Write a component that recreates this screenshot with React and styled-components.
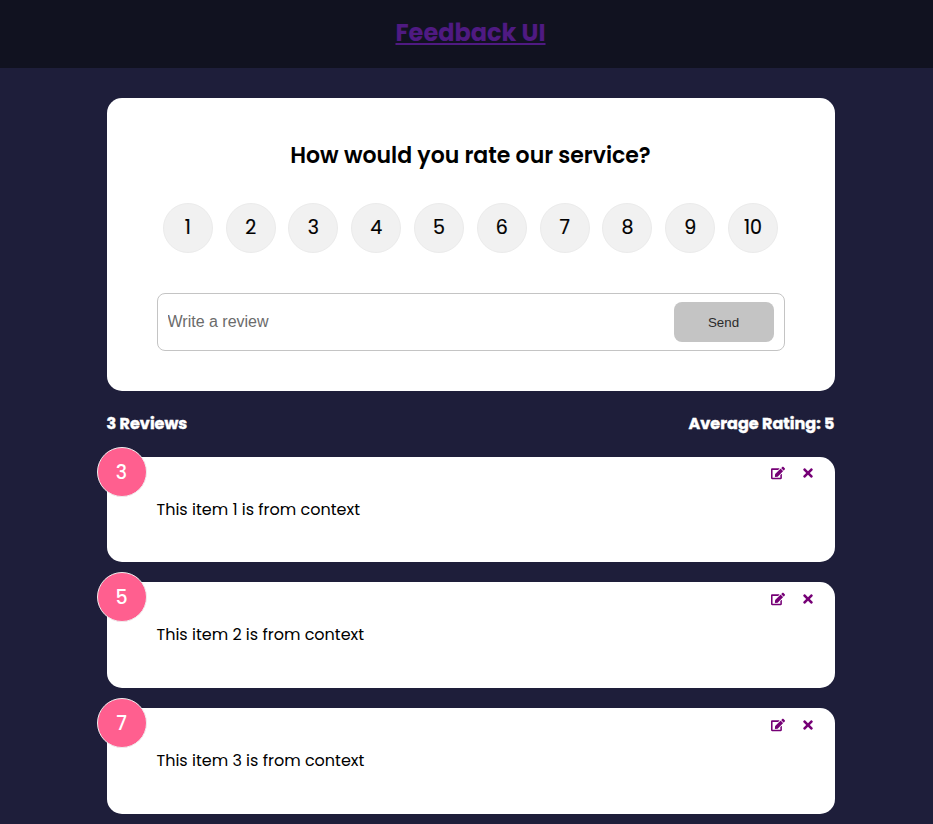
import React from 'react';
import styled, { createGlobalStyle } from 'styled-components';
import { FaTimes, FaEdit } from 'react-icons/fa';

const GlobalStyle = createGlobalStyle`
  * { box-sizing: border-box; margin: 0; padding: 0; }
  body {
    font-family: 'Poppins', 'Open Sans', sans-serif;
    background: #1e1e3a;
    line-height: 1.6;
    height: 824px;
    overflow: hidden;
  }
`;
const Header = styled.header`
  background: #111220; height: 68px; padding: 14px 0 0 8px;
  text-align: center;
`;
const Brand = styled.h2`
  font-size: 24px; font-weight: 700; color: #4f1a82; text-decoration: underline;
`;
const Container = styled.main`width: 728px; margin: 30px 98px 0 106.5px;`;
const Card = styled.div`
  background: #fff; border-radius: 15px; position: relative;
`;
const FormCard = styled(Card)`height: 293px; padding: 40px 50px;`;
const Title = styled.h2`font-size: 22px; font-weight: 600; text-align: center; line-height: 35px;`;
const Ratings = styled.ul`
  list-style: none; display: flex; justify-content: space-between;
  margin: 30px 6.5px 40px 6.3px;
`;
const Rating = styled.li`
  width: 50px; height: 50px; border: 1px solid #ebebeb; border-radius: 50%;
  background: #f1f1f1; font-size: 19px; line-height: 48px; text-align: center;
  -webkit-text-stroke: 0.2px #000;
`;
const InputGroup = styled.div`
  display: flex; align-items: center; height: 58px; padding: 8px 10px;
  border: 1px solid #c4c4c4; border-radius: 8px;
`;
const Input = styled.input`
  flex: 1; border: 0; outline: 0; font: 16px 'Liberation Sans', sans-serif;
  &::placeholder { color: #6b6b6b; }
`;
const Send = styled.button`
  width: 100px; height: 40px; border: 0; border-radius: 8px; background: #c4c4c4;
  color: #2b2b2b; font: 13.333px 'Liberation Sans', sans-serif;
`;
const Stats = styled.div`
  display: flex; justify-content: space-between; color: #fff; font-weight: 700;
  margin: 20px 0 21px; height: 24.8px; line-height: 25px;
  -webkit-text-stroke: 0.4px #fff;
`;
const Review = styled(Card)`height: 105.6px; padding: 40px 50px; margin-bottom: 20px;`;
const Badge = styled.div`
  position: absolute; top: -10px; left: -10px; width: 50px; height: 50px;
  border: 1px solid #eee; border-radius: 50%; background: #ff5f8f; color: #fff;
  font-size: 19px; font-weight: 500; line-height: 49px; text-align: center;
`;
const Actions = styled.div`
  position: absolute; top: 9.6px; right: 20px; display: flex; gap: 16px; color: #760076;
`;

const reviews = [[3, 1], [5, 2], [7, 3]];

export default function App() {
  return (
    <>
      <GlobalStyle />
      <Header><Brand>Feedback UI</Brand></Header>
      <Container>
        <FormCard>
          <Title>How would you rate our service?</Title>
          <Ratings>{Array.from({ length: 10 }, (_, i) => <Rating key={i}>{i + 1}</Rating>)}</Ratings>
          <InputGroup><Input placeholder="Write a review" /><Send>Send</Send></InputGroup>
        </FormCard>
        <Stats><h4>3 Reviews</h4><h4>Average Rating: 5</h4></Stats>
        {reviews.map(([rating, n]) => (
          <Review key={n}>
            <Badge>{rating}</Badge>
            <Actions><FaEdit size={14} /><FaTimes size={14} /></Actions>
            <p>This item {n} is from context</p>
          </Review>
        ))}
      </Container>
    </>
  );
}
